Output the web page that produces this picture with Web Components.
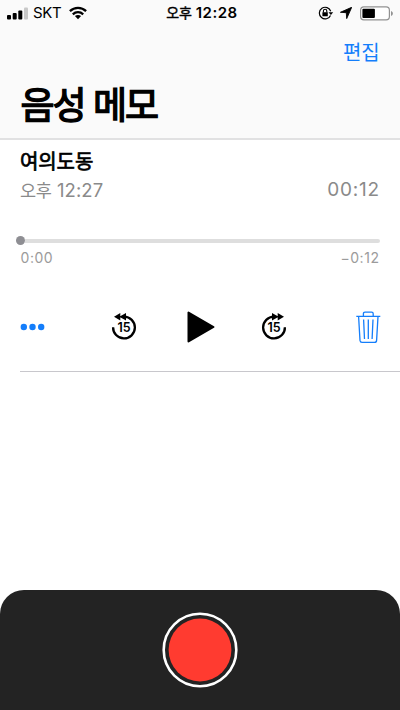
<!DOCTYPE html>
<html lang="ko">
<head>
<meta charset="utf-8">
<title>음성 메모</title>
<style>
html,body{margin:0;height:100%;background:#fff}
body{font-family:Inter,"Noto Sans CJK KR",sans-serif;color:#000;overflow:hidden}
</style>
</head>
<body>
<voice-memos></voice-memos>
<script>
const define = (name, html) => customElements.define(name, class extends HTMLElement {
  constructor() {
    super();
    const t = document.createElement('template');
    t.innerHTML = html;
    this.attachShadow({mode: 'open'}).append(t.content.cloneNode(true));
  }
});

define('status-bar', `<style>
:host{display:grid;grid-template-columns:1fr auto 1fr;align-items:center;height:26px;padding:0 6px 0 7px;box-sizing:border-box}
.l,.r{display:flex;align-items:center}
.r{justify-content:flex-end}
.c{font-size:15px;line-height:26px;letter-spacing:-.3px}
time{font-size:15px;line-height:26px;font-weight:600;letter-spacing:.5px;margin-left:3px}
time .k{font-size:14px;font-weight:400;-webkit-text-stroke:.4px #000;letter-spacing:-.3px}
svg{display:block;flex:none}
</style>
<div class="l">
<svg width="22" height="13" viewBox="0 0 22 13"><rect x="0" y="8" width="4" height="4.5" rx="1"/><rect x="5.7" y="6" width="4" height="6.5" rx="1"/><rect x="11.3" y="3.5" width="4" height="9" rx="1"/><rect x="17" y="0.5" width="4" height="12" rx="1" fill="#c8c8c8"/></svg>
<span class="c" style="margin-left:4px">SKT</span>
<svg style="margin-left:7.5px" width="18" height="14" viewBox="0 0 18 14"><g fill="none" stroke="#000" stroke-width="2.3"><path d="M.9 5.2C5.5.8 12.5.8 17.1 5.2"/><path d="M3.8 8.3C6.8 5.5 11.2 5.5 14.2 8.3"/></g><path d="M5.9 10.1C7.7 8.6 10.3 8.6 12.1 10.1L9 13.2Z"/></svg>
</div>
<time><span class="k">오후</span> 12:28</time>
<div class="r">
<svg width="16" height="14" viewBox="0 0 16 14"><path d="M12.7 5.3A5.8 5.8 0 1 0 12.5 9.4" fill="none" stroke="#000" stroke-width="1.2"/><path d="M10.5 6.2h4.7L12.9 9Z"/><rect x="4.4" y="6.2" width="5.4" height="4" rx=".5"/><path d="M5.4 6.4V4.9a1.7 1.7 0 0 1 3.4 0v1.5" fill="none" stroke="#000" stroke-width="1.1"/></svg>
<svg style="margin-left:6.5px" width="12" height="12" viewBox="0 0 12 12"><path d="M11.7.3L6.7 11.6 6.3 5.7.4 5.3Z" stroke="#000" stroke-width=".9" stroke-linejoin="round"/></svg>
<svg style="margin-left:8px" width="34" height="15" viewBox="0 0 34 15"><rect x=".6" y=".9" width="28.8" height="13" rx="3.3" fill="#fff" stroke="#929292" stroke-width="1.2"/><rect x="2.4" y="2.7" width="12.5" height="9.4" rx="1"/><path d="M31 5c2.5.8 2.5 4.1 0 4.9Z" fill="#929292"/></svg>
</div>`);

define('nav-header', `<style>
:host{display:block;height:140px;box-sizing:border-box;background:#fafafa;border-bottom:2px solid #e1e1e2}
.e{display:flex;justify-content:flex-end;padding-right:20.5px;font-size:20px;line-height:54px;height:52px;color:#147efb;letter-spacing:-.2px}
h1{margin:0;padding-left:20.5px;font-size:37px;font-weight:400;-webkit-text-stroke:1.4px #000;line-height:56px;letter-spacing:-2px}
</style><slot name="status"></slot><div class="e"><slot name="action"></slot></div><h1><slot></slot></h1>`);

define('scrub-bar', `<style>
:host{display:block}
.t{display:flex;align-items:center;height:11px;margin-left:-4px}
i{width:9px;height:9px;border-radius:50%;background:#8e8e93}
b{flex:1;height:4px;background:#dedede;border-radius:0 2px 2px 0}
.n{display:flex;justify-content:space-between;font-size:14px;line-height:20px;margin-top:2px;color:#9b9b9b;letter-spacing:.55px}
.n slot{display:block;margin:0 .5px}
</style><div class="t"><i></i><b></b></div><div class="n"><slot name="start"></slot><slot name="end"></slot></div>`);

define('skip-icon', `<style>
:host{display:block;width:26px;height:28px}svg{display:block}
:host([forward]) .a{transform:translateX(26px) scaleX(-1)}
text{font:600 12.5px Inter,sans-serif;letter-spacing:-.1px}
</style><svg width="26" height="28" viewBox="0 0 26 28"><g class="a"><path d="M2.1 14.2A10.9 10.9 0 1 0 13 3.6" fill="none" stroke="#000" stroke-width="2.3"/><path d="M3 3.7L9.3 0V7.4Z M8.3 3.7L15 0V7.4Z"/></g><text x="13.1" y="19" text-anchor="middle">15</text></svg>`);

define('player-controls', `<style>
:host{display:grid;grid-template-columns:90px 76px 73px 1fr auto;align-items:center;height:36px}
svg{display:block}
</style>
<svg width="26" height="8" viewBox="0 0 26 8" fill="#147efb"><circle cx="3.8" cy="4" r="3.2"/><circle cx="12.5" cy="4" r="3.2"/><circle cx="21.2" cy="4" r="3.2"/></svg>
<skip-icon style="margin-left:1px"></skip-icon>
<svg width="30" height="32" viewBox="0 0 30 32"><path d="M2.5 1.5V30.5L27.5 16Z" stroke="#000" stroke-width="2" stroke-linejoin="round"/></svg>
<skip-icon forward style="margin-left:2px"></skip-icon>
<svg width="25" height="34" viewBox="0 0 25 34" style="margin-right:-1px" fill="none" stroke="#147efb" stroke-width="1.3"><path d="M.3 6.3H24.3M7.4 6V3.7Q7.4 2.2 9 2.2H15.6Q17.2 2.2 17.2 3.7V6M2.6 6.5L4 30.4Q4.2 32.4 6 32.4H18.6Q20.5 32.4 20.6 30.4L22 6.5M7.6 9.5L8.5 29M12.3 9.5V29M17 9.5L16.1 29"/></svg>`);

define('memo-row', `<style>
:host{display:block;margin-left:20px;height:232px;box-sizing:border-box;border-bottom:1px solid #c8c7cc;padding-right:20px}
h2{margin:0;font-size:20px;line-height:28px;font-weight:400;-webkit-text-stroke:.7px #000;letter-spacing:-.1px;padding-top:8px}
.m{display:flex;justify-content:space-between;font-size:18.5px;line-height:28px;height:30px;color:#8a8a8a;letter-spacing:.1px}
scrub-bar{margin-top:29px}
player-controls{margin-top:41px}
</style>
<h2><slot></slot></h2><div class="m"><slot name="time"></slot><slot name="length"></slot></div>
<scrub-bar><span slot="start">0:00</span><span slot="end">−0:12</span></scrub-bar>
<player-controls></player-controls>`);

define('record-panel', `<style>
:host{display:flex;align-items:center;justify-content:center;height:120px;background:#232323;border-radius:24px 24px 0 0}
svg{display:block}
</style><svg width="76" height="76" viewBox="0 0 76 76" role="img" aria-label="녹음"><circle cx="38" cy="38" r="36.3" fill="none" stroke="#fff" stroke-width="2.6"/><circle cx="38" cy="38" r="31.4" fill="#ff3b30"/></svg>`);

define('voice-memos', `<style>
:host{display:flex;flex-direction:column;width:400px;height:710px}
main{flex:1}
.k{font-size:17.5px;letter-spacing:-.3px}
</style>
<nav-header><status-bar slot="status"></status-bar><span slot="action">편집</span>음성 메모</nav-header>
<main><memo-row>여의도동<span slot="time"><span class="k">오후</span> 12:27</span><span slot="length" style="font-size:19px;letter-spacing:.8px">00:12</span></memo-row></main>
<record-panel></record-panel>`);
</script>
</body>
</html>
